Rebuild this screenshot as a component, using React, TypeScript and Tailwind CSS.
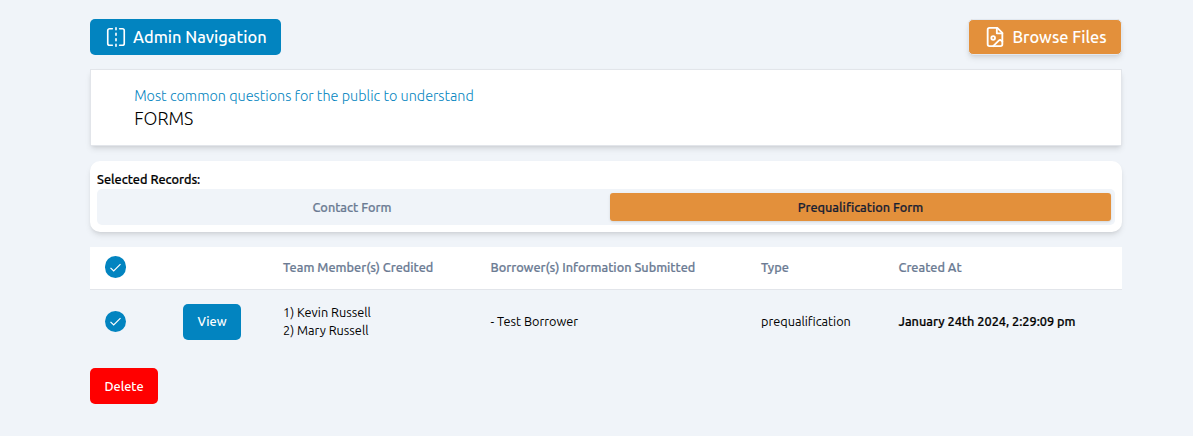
import React from 'react';

const iconProps = {
  viewBox: '0 0 24 24',
  fill: 'none',
  stroke: 'currentColor',
  strokeLinecap: 'round' as const,
  strokeLinejoin: 'round' as const,
};

function FlipIcon() {
  return (
    <svg {...iconProps} strokeWidth={1.8} className="size-[22px] shrink-0">
      <path d="M8 3H5a2 2 0 0 0-2 2v14c0 1.1.9 2 2 2h3M16 3h3a2 2 0 0 1 2 2v14a2 2 0 0 1-2 2h-3M12 20v2M12 14v2M12 8v2M12 2v2" />
    </svg>
  );
}

function FileImageIcon() {
  return (
    <svg {...iconProps} strokeWidth={2} className="size-[22px] shrink-0">
      <path d="M14.5 2H6a2 2 0 0 0-2 2v16a2 2 0 0 0 2 2h12a2 2 0 0 0 2-2V7.5L14.5 2z" />
      <path d="M14 2v6h6" />
      <circle cx="10" cy="13" r="2" />
      <path d="m20 17-1.09-1.09a2 2 0 0 0-2.82 0L10 22" />
    </svg>
  );
}

function CheckDot() {
  return (
    <span role="checkbox" aria-checked="true" className="flex h-[21.6px] w-[21px] items-center justify-center rounded-full bg-[#0284c0] text-white">
      <svg viewBox="0 0 15 15" className="size-[15px]">
        <path d="M2.5 7.8 5.7 11 12.5 4.2" fill="none" stroke="currentColor" strokeWidth="1.2" />
      </svg>
    </span>
  );
}

const columns = 'grid grid-cols-[93px_100px_207.5px_270.5px_137.5px_1fr] items-center';
const strong = 'font-medium [-webkit-text-stroke:0.2px_currentColor]';

export default function App() {
  return (
    <div className="min-h-[436px] bg-[#f0f4f9] px-[90px] pt-[19px] font-['Ubuntu','Open_Sans',sans-serif] text-[12.7px] leading-[18px] text-black">
      <main className="w-[1032px]">
        <div className="flex justify-between">
          <button className="flex h-9 w-[191px] items-center gap-[6px] rounded-[5px] bg-[#0284c0] pl-[15px] text-[16.4px] font-medium whitespace-nowrap text-white">
            <FlipIcon />
            <span>Admin Navigation</span>
          </button>
          <button className="flex h-9 w-[154px] items-center gap-[6.5px] rounded-[5px] border border-[#e2e8f0] bg-[#e3903b] pl-[15px] text-[16.4px] font-medium whitespace-nowrap text-white shadow-md">
            <FileImageIcon />
            <span>Browse Files</span>
          </button>
        </div>

        <section className="mt-[14px] h-[77px] border border-[#e2e5ea] bg-white pt-[15px] pl-[43.2px] shadow-md">
          <p className="text-[14.4px] leading-[23px] font-light text-[#0284c0]">Most common questions for the public to understand</p>
          <h1 className="text-[18px] leading-[20px] font-light">FORMS</h1>
        </section>

        <section className="mt-[15px] h-[71px] rounded-[10px] bg-white px-[7px] pt-[9px] shadow-md">
          <p className={`mb-px ${strong}`}>Selected Records:</p>
          <div className="flex h-9 rounded-[5px] bg-[#f0f4f9] p-1">
            <button className={`h-7 w-[509px] pr-[7px] text-[#6b7b93] ${strong}`}>Contact Form</button>
            <button className={`h-7 w-[501px] rounded-[3px] bg-[#e3903b] text-[#172033] shadow-sm ${strong}`}>Prequalification Form</button>
          </div>
        </section>

        <div className="mt-[15px]">
          <div className={`${columns} h-[43px] border-b border-[#e2e5ea] bg-white pb-[2px] text-[#6b7b93] ${strong}`}>
            <div className="pl-[15px]"><CheckDot /></div>
            <div />
            <div>Team Member(s) Credited</div>
            <div>Borrower(s) Information Submitted</div>
            <div>Type</div>
            <div>Created At</div>
          </div>
          <div className={`${columns} h-16 pb-px`}>
            <div className="pl-[15px]"><CheckDot /></div>
            <div className="pt-px"><button className="h-9 w-[58px] rounded-[5px] bg-[#0284c0] pb-[2px] font-medium text-white">View</button></div>
            <div className="pb-px">1) Kevin Russell<br />2) Mary Russell</div>
            <div className="pb-px">- Test Borrower</div>
            <div className="pb-px">prequalification</div>
            <div className={`pb-px ${strong}`}>January 24th 2024, 2:29:09 pm</div>
          </div>
        </div>

        <button className="mt-[14px] h-9 w-[68px] rounded-[5px] bg-[#ff0000] font-medium text-white">Delete</button>
      </main>
    </div>
  );
}
